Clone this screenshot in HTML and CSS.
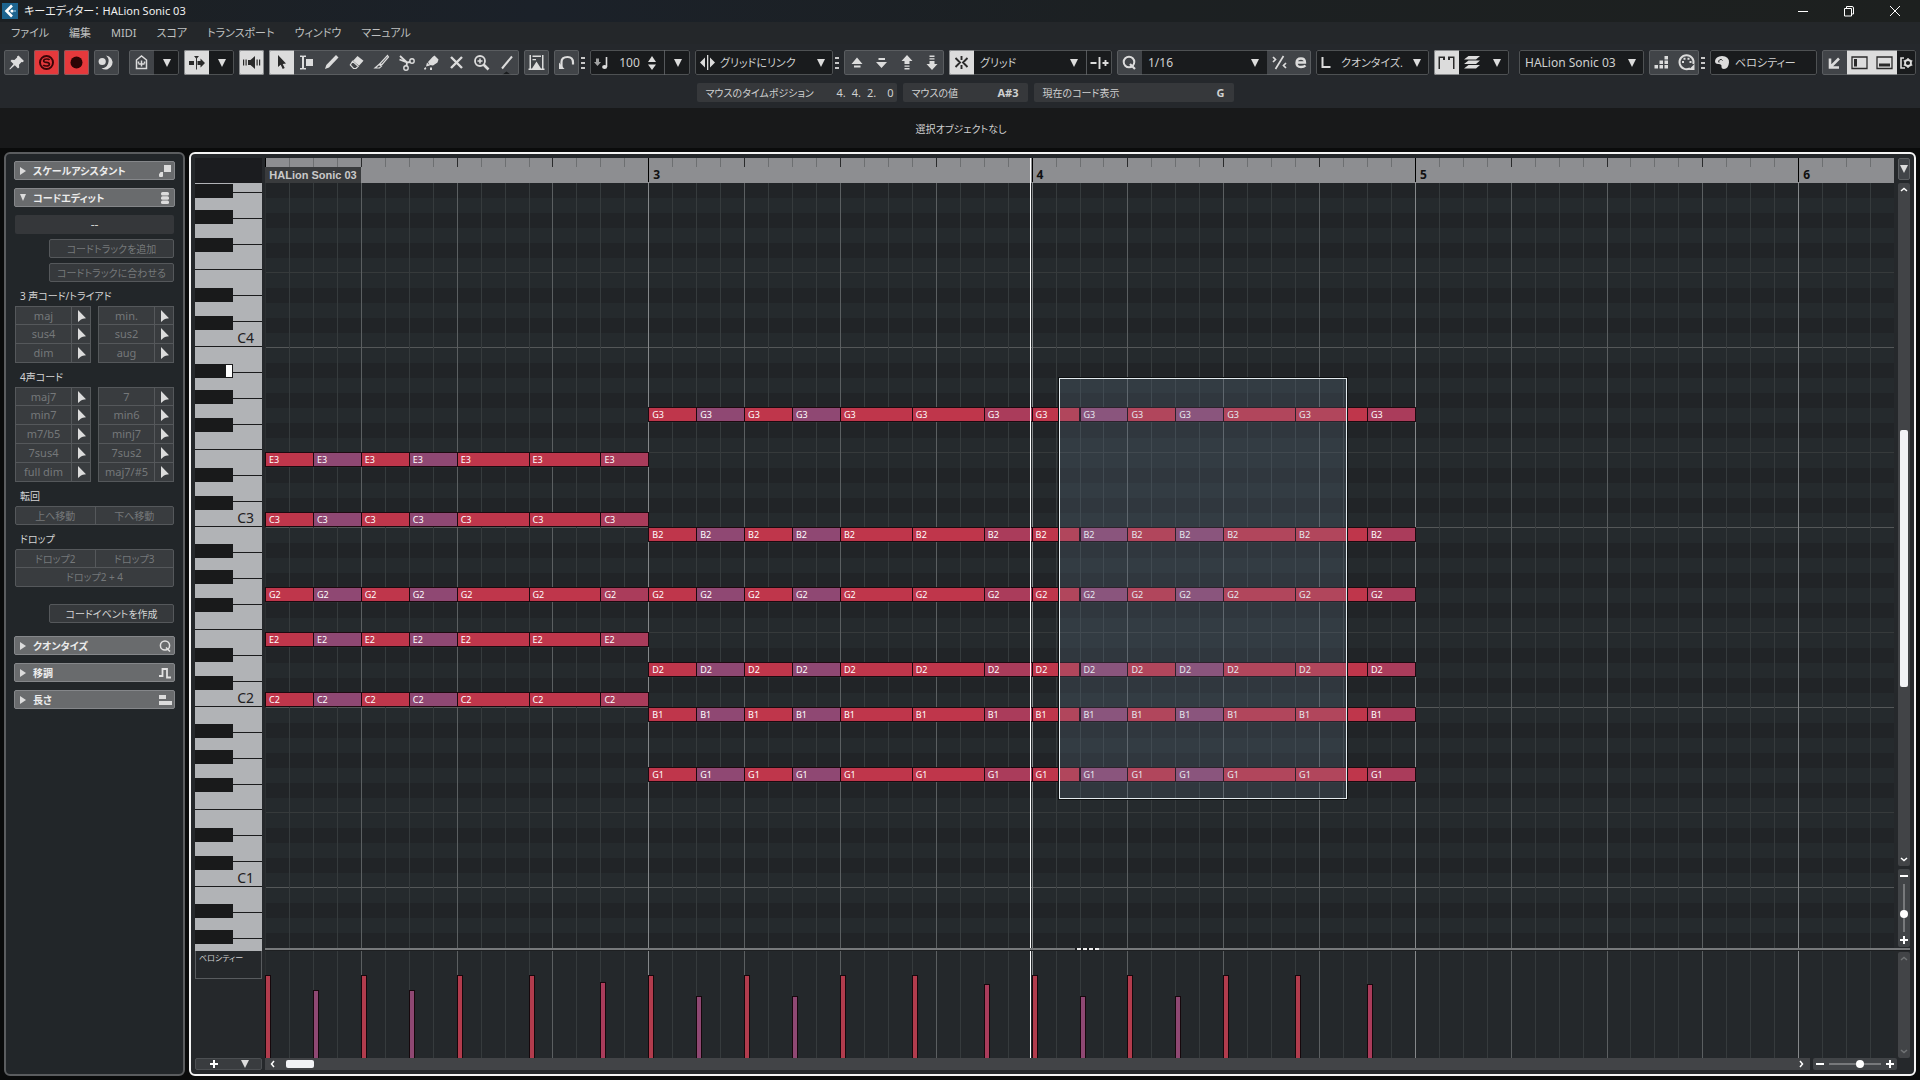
FILE: index.html
```html
<!DOCTYPE html>
<html lang="ja">
<head>
<meta charset="utf-8">
<title>キーエディター： HALion Sonic 03</title>
<meta name="viewport" content="width=device-width, initial-scale=1">
<link rel="stylesheet" href="styles.css">
</head>
<body>
<svg class="defs" aria-hidden="true">
  <symbol id="down" viewBox="0 0 8 8"><path d="M0 0h8L4 8z"/></symbol>
  <symbol id="ptr" viewBox="0 0 8 12"><path d="M0 0l8 8.300L4.800 8.800 3 9.500 0 12z"/></symbol>
</svg>

<header class="titlebar">
  <svg class="app-icon" viewBox="0 0 16 16"><rect width="16" height="16" fill="#1d648f"/><path d="M10 2.500L4.500 8l5.500 5.500" fill="none" stroke="#fff" stroke-width="2.600"/><circle cx="10" cy="8" r="1.600" fill="#fff"/><circle cx="13" cy="8" r="1" fill="#7fb6d6"/></svg>
  <h1 class="title">キーエディター： HALion Sonic 03</h1>
  <div class="window-buttons">
    <button aria-label="最小化"><svg viewBox="0 0 12 12"><path d="M1 6.500h10"/></svg></button>
    <button aria-label="元に戻す"><svg viewBox="0 0 12 12"><path d="M1.500 3.500h7v7.500h-7zM3.500 3.500V1.500h5.500q1.500 0 1.500 1.500v6H8.500"/></svg></button>
    <button aria-label="閉じる"><svg viewBox="0 0 12 12"><path d="M1 1l10 10M11 1L1 11"/></svg></button>
  </div>
</header>

<nav class="menubar">
  <a href="#file">ファイル</a><a href="#edit">編集</a><a href="#midi">MIDI</a><a href="#score">スコア</a><a href="#transport">トランスポート</a><a href="#window">ウィンドウ</a><a href="#manual">マニュアル</a>
</nav>

<div class="toolbar">
  <div class="group"><button class="tool" aria-label="ピン"><svg viewBox="0 0 25 25"><path d="M14.500 5.500l5.500 5.500-1.500 1.200-1-.2-2.500 2.800.2 2.700-1.200 1-3.200-3.200L6 19.500l-.7-.6 4.200-4.900-3-3 1.100-1.200 2.800.3 2.700-2.600-.1-1z"/></svg></button></div>
  <div class="group"><button class="tool red" aria-label="ソロ"><svg viewBox="0 0 25 25"><circle cx="12.500" cy="12.500" r="6.500" fill="none" stroke="#3a0507" stroke-width="2"/><path d="M15.500 10q-.5-1-3-1t-2.800 1.600 2.800 1.800 2.900 1.900-2.900 1.700-3.200-1.200" fill="none" stroke="#3a0507" stroke-width="1.700"/></svg></button></div>
  <div class="group"><button class="tool red" aria-label="録音"><svg viewBox="0 0 25 25"><circle cx="12.500" cy="12.500" r="6" fill="#2b0405"/></svg></button></div>
  <div class="group"><button class="tool" aria-label="レトロスペクティブ録音"><svg viewBox="0 0 25 25"><path d="M12 5.500a7 7 0 1 1-4.500 12.700A7.200 7.200 0 0 0 12 5.500z"/><circle cx="8.200" cy="11.500" r="3.600"/></svg></button></div>
  <div class="group apart dark"><button class="tool fill" aria-label="ホーム"><svg viewBox="0 0 25 25"><path d="M7.500 18.500h10V10l-5-4-5 4zM9.500 14h6M12.500 10.500v6M9.500 11.500v2M15.500 11.500v2" fill="none" stroke="#dcdcdc" stroke-width="1.500"/></svg></button><button class="tool" aria-label="ホームメニュー"><svg class="tri"><use href="#down"/></svg></button></div>
  <div class="group dark"><button class="tool on" aria-label="自動スクロール"><svg viewBox="0 0 25 25"><path d="M5 11h5v4H5zM13.500 11h3V8.500l4.500 4.500-4.500 4.500V15h-3zM10 6h5l-2.500 3z"/><path d="M12.500 7v12.500" stroke="#333" stroke-width="1"/></svg></button><button class="tool" aria-label="自動スクロール設定"><svg class="tri"><use href="#down"/></svg></button></div>
  <div class="group"><button class="tool on" aria-label="試聴"><svg viewBox="0 0 25 25"><path d="M9 10h2.500l4.500-4v13l-4.500-4H9zM4 9.500h1.200v6H4zM6.500 9.500h1.200v6H6.500zM17.500 9.500h1.200v6h-1.200zM20 9.500h1.200v6H20z"/></svg></button></div>
  <div class="group">
    <button class="tool on" aria-label="選択"><svg viewBox="0 0 25 25"><path d="M9 5l8 8.500-3.300.4 2 4-2 1-2-4.200L9 17z"/></svg></button>
    <button class="tool" aria-label="範囲"><svg viewBox="0 0 25 25"><path d="M6 5.500h2.500L9 6l.5-.5H12v1.500h-2v11h2v1.500H9.500L9 19l-.5.500H6V18h2V7H6zM12 9h7v7h-7z"/></svg></button>
    <button class="tool" aria-label="鉛筆"><svg viewBox="0 0 25 25"><path d="M17 5l2.500 2.500L10 17.500 6 19l1.300-4z"/></svg></button>
    <button class="tool" aria-label="消しゴム"><svg viewBox="0 0 25 25"><path d="M13.500 6l6 4.800-4.500 5-6-5z"/><path d="M8.500 11.300l5.700 4.900-2.200 2.300H9.500L6.300 15z" fill="none" stroke="#dcdcdc" stroke-width="1.200"/></svg></button>
    <button class="tool" aria-label="ナイフ"><svg viewBox="0 0 25 25"><path d="M18.500 5.500l1 1.500-6.500 7.500-2.500-.5zM10 14.500l2.500 1.500-2 2H6z" fill="none" stroke="#dcdcdc" stroke-width="1.200"/></svg></button>
    <button class="tool" aria-label="はさみ"><svg viewBox="0 0 25 25"><path d="M6 6l7 6.500 3.500-.5M5.500 9.500l7.500 3-.5 3.500" fill="none" stroke="#dcdcdc" stroke-width="1.800"/><circle cx="18" cy="11" r="2.200" fill="none" stroke="#dcdcdc" stroke-width="1.400"/><circle cx="12" cy="18" r="2.200" fill="none" stroke="#dcdcdc" stroke-width="1.400"/></svg></button>
    <button class="tool" aria-label="のり"><svg viewBox="0 0 25 25"><path d="M13.500 7l2-1.500 4 4-1 3-4.500 3-3.500-.5-1.500-3zM8 12.500l3 3-4 1zM6.500 17q1.500 2 0 2.500t-1.500-1zM11 17.500h2V20h-2z"/></svg></button>
    <button class="tool" aria-label="ミュート"><svg viewBox="0 0 25 25"><path d="M7 7l11 11M18 7L7 18" stroke="#dcdcdc" stroke-width="2.400"/></svg></button>
    <button class="tool" aria-label="ズーム"><svg viewBox="0 0 25 25"><circle cx="11" cy="11" r="5" fill="none" stroke="#dcdcdc" stroke-width="1.800"/><path d="M11 8.500v5M8.500 11h5" stroke="#dcdcdc" stroke-width="1.500"/><path d="M14.500 14.500l5 5" stroke="#dcdcdc" stroke-width="2.600"/></svg></button>
    <button class="tool" aria-label="ライン"><svg viewBox="0 0 25 25"><path d="M8 18.500L18 6.500" stroke="#dcdcdc" stroke-width="2"/><path d="M8 25l4.500-3.500L17 25z" fill="#191b1d"/></svg></button>
  </div>
  <div class="group"><button class="tool" aria-label="コントローラーレーン"><svg viewBox="0 0 25 25"><path d="M5.500 5H7v14H5.500zM18 5h1.500v14H18zM8.500 5.500H17V7H8.500zM8.500 9H12v1.300H8.500zM4.500 18.500H8l4.500-7 4.500 7h3.500V20h-16z"/></svg></button></div>
  <div class="group"><button class="tool" aria-label="フィードバック"><svg viewBox="0 0 25 25"><path d="M7.500 17.500V12q0-5 6-5 5.500 0 5.500 5.500v2" fill="none" stroke="#dcdcdc" stroke-width="2.200"/><path d="M5 12.500l5.500 6.500H5z"/></svg></button></div>
  <span class="grip"></span>
  <div class="group dark velocity"><svg class="ico" viewBox="0 0 25 25"><path d="M6 8.500h3V12h2l-3.500 4L4 12h2z" opacity=".7"/><path d="M16.500 7v10" stroke="#dcdcdc" stroke-width="1.600"/><ellipse cx="14.600" cy="17" rx="2.500" ry="2"/></svg><input class="number" type="text" value="100" aria-label="挿入ベロシティー"><svg class="spin" viewBox="0 0 8 14"><path d="M0 6l4-6 4 6zM0 8.500h8l-4 5.500z"/></svg><button class="tool cell" aria-label="ベロシティー設定"><svg class="tri"><use href="#down"/></svg></button></div>
  <div class="group dark link kana"><svg class="ico" viewBox="0 0 25 25"><path d="M10 7.500v10L5 12.500zM15 7.500v10l5-5zM12 5h1.300v15H12z"/></svg><select aria-label="グリッドにリンク"><option>グリッドにリンク</option></select><svg class="tri"><use href="#down"/></svg></div>
  <span class="grip"></span>
  <div class="group">
    <button class="tool" aria-label="上へ移動"><svg viewBox="0 0 25 25"><path d="M13 7.500l5.500 6.500h-11zM10 15.500h6.500v2H10z"/></svg></button>
    <button class="tool" aria-label="下へ移動"><svg viewBox="0 0 25 25"><path d="M12.500 18l5.500-6H7zM9.500 8H16v2H9.500z"/></svg></button>
    <button class="tool" aria-label="1オクターブ上へ"><svg viewBox="0 0 25 25"><path d="M13 5l5.500 6h-3v3h-5v-3h-3zM10.500 15.500h5v1.300h-5zM10.500 18h5v1.500h-5z"/></svg></button>
    <button class="tool" aria-label="1オクターブ下へ"><svg viewBox="0 0 25 25"><path d="M13 20l5.500-6h-3v-3h-5v3h-3zM10.500 8.200h5v1.300h-5zM10.500 5.500h5V7h-5z"/></svg></button>
  </div>
  <div class="group dark grid-type kana"><button class="tool on" aria-label="スナップ"><svg viewBox="0 0 25 25"><path d="M6.500 8l4.500 4.500L6.500 17M18.500 8L14 12.500l4.500 4.500M12.500 6v4M12.500 15v4" fill="none" stroke="#2a2a2a" stroke-width="1.900"/></svg></button><select aria-label="スナップタイプ"><option>グリッド</option></select><svg class="tri"><use href="#down"/></svg><button class="tool cell" aria-label="グリッド調整"><svg viewBox="0 0 25 25"><path d="M3.500 13h6M12.500 7v12M15.500 13h6M18.500 10v6" stroke="#dcdcdc" stroke-width="1.900"/></svg></button></div>
  <div class="group dark quantize"><button class="tool fill" aria-label="クオンタイズを適用"><svg viewBox="0 0 25 25"><circle cx="12" cy="12" r="5.300" fill="none" stroke="#dcdcdc" stroke-width="2"/><path d="M13 14l5 5" stroke="#dcdcdc" stroke-width="2.200"/></svg></button><select aria-label="クオンタイズ"><option>1/16</option></select><svg class="tri"><use href="#down"/></svg><button class="tool fill" aria-label="ソフトクオンタイズ"><svg viewBox="0 0 25 25"><path d="M8.500 19l8-13M6 7l2.500 2.500L6 12M19 13l-2.500 2.500L19 18" fill="none" stroke="#dcdcdc" stroke-width="1.700"/></svg></button><button class="tool fill slim" aria-label="クオンタイズパネル"><svg viewBox="0 0 19 25"><path d="M4.500 12.500h8.500q0-4-4-4-4.500 0-4.500 4.500 0 4 4.500 4 3 0 4.500-1.500" fill="none" stroke="#dcdcdc" stroke-width="2.300"/></svg></button></div>
  <div class="group dark length kana"><svg class="ico" viewBox="0 0 25 25"><path d="M6.500 7v10h8" fill="none" stroke="#dcdcdc" stroke-width="2"/></svg><select aria-label="長さクオンタイズ"><option>クオンタイズ.</option></select><svg class="tri"><use href="#down"/></svg></div>
  <div class="group dark"><button class="tool on" aria-label="パート境界"><svg viewBox="0 0 25 25"><path d="M4.500 6.500H11V10H9V8H6v11H4.500zM14 6.500h6.500V19H19V8h-3v2h-2z"/></svg></button><button class="tool" aria-label="レイヤー"><svg viewBox="0 0 25 25"><path d="M9.500 6H21l-4 3.500H5zM9.500 10.500H21L17 14H5zM9.500 15H21l-4 3.500H5z"/></svg></button><button class="tool" aria-label="レイヤー設定"><svg class="tri"><use href="#down"/></svg></button></div>
  <div class="group apart dark track"><select aria-label="編集パート"><option>HALion Sonic 03</option></select><svg class="tri"><use href="#down"/></svg></div>
  <div class="group"><button class="tool" aria-label="ステップ入力"><svg viewBox="0 0 25 25"><path d="M5.500 15H9v3.500H5.500zM10.500 15H14v3.500h-3.500zM10.500 10.500H14V14h-3.500zM15.500 15H19v3.500h-3.500zM15.500 10.500H19V14h-3.500zM15.500 6H19v3.500h-3.500z"/></svg></button><button class="tool" aria-label="MIDI入力"><svg viewBox="0 0 25 25"><path d="M16 18.300A7 7 0 1 1 19.300 14" fill="none" stroke="#dcdcdc" stroke-width="2"/><path d="M8 11h2v2H8zM9.500 7.800h2v2h-2zM13.500 7.800h2v2h-2zM15.500 11h2v2h-2zM20.500 14v6h-6z"/></svg></button></div>
  <span class="grip"></span>
  <div class="group dark colors kana"><svg class="ico" viewBox="0 0 25 25"><path d="M12 6q7 0 7 6.500-.5 6-5 6.500-3 0-2.500-3.500-.5-1.500-2.500-1.500-4 .5-4-3Q5.500 6.500 12 6z"/><path d="M9 12.500a2 2 0 0 1 3.500-2" stroke="#191b1d" fill="none"/></svg><select aria-label="イベントカラー"><option>ベロシティー</option></select></div>
  <div class="group dark zones"><button class="tool fill" aria-label="別ウィンドウ"><svg viewBox="0 0 25 25"><path d="M17 8.500L9 16.500M8 8.500v9h9" fill="none" stroke="#dcdcdc" stroke-width="2.600"/></svg></button><button class="tool on" aria-label="左ゾーン"><svg viewBox="0 0 25 25"><path d="M5 7h15v11.500H5z" fill="none" stroke="#2a2a2a" stroke-width="1.300"/><path d="M7 9h3v7.500H7z"/></svg></button><button class="tool on" aria-label="下ゾーン"><svg viewBox="0 0 25 25"><path d="M5 7h15v11.500H5z" fill="none" stroke="#2a2a2a" stroke-width="1.300"/><path d="M7 13.500h11v3H7z"/></svg></button><button class="tool slim" aria-label="レイアウト設定"><svg viewBox="0 0 19 25"><path d="M7 8H4v10h4" fill="none" stroke="#dcdcdc" stroke-width="1.600"/><circle cx="11" cy="13" r="3" fill="none" stroke="#dcdcdc" stroke-width="1.800"/><path d="M11 8v2M11 16v2M6.700 10.500l1.500 1M13.800 14.500l1.500 1M6.700 15.500l1.500-1M13.800 11.500l1.500-1" stroke="#dcdcdc" stroke-width="1.400"/></svg></button></div>
</div>

<div class="info">
  <div class="info-cell wide"><span>マウスのタイムポジション</span><span class="pos"><i>4.</i><i>4.</i><i>2.</i><i>0</i></span></div>
  <div class="info-cell"><span>マウスの値</span><b>A#3</b></div>
  <div class="info-cell wide"><span>現在のコード表示</span><b>G</b></div>
</div>
<div class="status">選択オブジェクトなし</div>

<main class="workspace">
  <aside class="inspector">
    <button class="section"><svg class="fold" viewBox="0 0 8 8"><path d="M1 0l6 4-6 4z"/></svg><span>スケールアシスタント</span><svg class="sico" viewBox="0 0 14 14"><path d="M6 1h7v7H6zM2 9q0-1 1-1h2v4q0 1-1 1H2q-1 0-1-1v-2z"/></svg></button>
    <button class="section"><svg class="fold" viewBox="0 0 8 8"><path d="M1 0h6L4 7z"/></svg><span>コードエディット</span><svg class="sico" viewBox="0 0 14 14"><rect x="3" y="1" width="8" height="3.400" rx="1.500"/><rect x="3" y="5.300" width="8" height="3.400" rx="1.500"/><rect x="3" y="9.600" width="8" height="3.400" rx="1.500"/></svg></button>
    <div class="chord-editor">
      <output class="chord-display">--</output>
      <button class="action" disabled>コードトラックを追加</button>
      <button class="action" disabled>コードトラックに合わせる</button>
      <h2>3 声コード/トライアド</h2>
      <div class="chords" data-chords="maj,min.,sus4,sus2,dim,aug"></div>
      <h2>4声コード</h2>
      <div class="chords" data-chords="maj7,7,min7,min6,m7/b5,minj7,7sus4,7sus2,full dim,maj7/#5"></div>
      <h2>転回</h2>
      <div class="pair"><button disabled>上へ移動</button><button disabled>下へ移動</button></div>
      <h2>ドロップ</h2>
      <div class="pair"><button disabled>ドロップ2</button><button disabled>ドロップ3</button><button class="both" disabled>ドロップ2 + 4</button></div>
      <button class="action create">コードイベントを作成</button>
    </div>
    <button class="section"><svg class="fold" viewBox="0 0 8 8"><path d="M1 0l6 4-6 4z"/></svg><span>クオンタイズ</span><svg class="sico" viewBox="0 0 14 14"><circle cx="7" cy="6.500" r="4.600" fill="none" stroke="#e2e2e2" stroke-width="1.500"/><path d="M8 8.500l4 4" stroke="#e2e2e2" stroke-width="1.600"/></svg></button>
    <button class="section"><svg class="fold" viewBox="0 0 8 8"><path d="M1 0l6 4-6 4z"/></svg><span>移調</span><svg class="sico" viewBox="0 0 14 14"><path d="M1 10h3.500V3H9v8.500h4" fill="none" stroke="#e2e2e2" stroke-width="1.800"/></svg></button>
    <button class="section"><svg class="fold" viewBox="0 0 8 8"><path d="M1 0l6 4-6 4z"/></svg><span>長さ</span><svg class="sico" viewBox="0 0 14 14"><path d="M1 2h7v4H1zM1 8h13v4H1z"/></svg></button>
  </aside>

  <section class="editor">
    <div class="corner"></div>
    <div class="ruler"><div class="ticks" id="ticks"></div><span class="part-name">HALion Sonic 03</span></div>
    <button class="ruler-menu" aria-label="ルーラー設定"><svg class="tri"><use href="#down"/></svg></button>

    <div class="piano" id="piano"></div>
    <div class="roll">
      <div class="lanes"><div class="lane-octave"></div><div class="lane-octave"></div><div class="lane-octave"></div><div class="lane-octave"></div><div class="lane-octave"></div></div>
      <div class="columns"></div>
      <div class="notes" id="notes"></div>
    </div>
    <div class="rail">
      <div class="scroll-v"><svg viewBox="0 0 8 5"><path d="M1 4l3-2.500L7 4"/></svg><span class="thumb-v"></span><svg viewBox="0 0 8 5"><path d="M1 1l3 2.500L7 1"/></svg></div>
      <div class="zoom-v"><button aria-label="縦に縮小"><svg viewBox="0 0 8 8"><path d="M0 4h8"/></svg></button><input type="range" value="66" aria-label="縦ズーム"><button aria-label="縦に拡大"><svg viewBox="0 0 8 8"><path d="M0 4h8M4 0v8"/></svg></button></div>
    </div>

    <div class="divider"><span class="handle"></span></div>

    <div class="lane-head"><span>ベロシティー</span></div>
    <div class="velocities"><div class="columns"></div><div class="notes" id="vels"></div></div>
    <div class="scroll-v faint"><svg viewBox="0 0 8 5"><path d="M1 4l3-2.500L7 4"/></svg><svg viewBox="0 0 8 5"><path d="M1 1l3 2.500L7 1"/></svg></div>

    <div class="lane-buttons"><button aria-label="レーンを追加"><svg viewBox="0 0 8 8"><path d="M0 4h8M4 0v8"/></svg></button><button aria-label="レーン設定"><svg class="tri"><use href="#down"/></svg></button></div>
    <div class="bottom">
      <div class="scroll-h"><svg viewBox="0 0 5 8"><path d="M4 1L1.500 4 4 7"/></svg><span class="thumb-h"></span><svg viewBox="0 0 5 8"><path d="M1 1l2.500 3L1 7"/></svg></div>
      <div class="zoom-h"><button aria-label="横に縮小"><svg viewBox="0 0 8 8"><path d="M0 4h8"/></svg></button><input type="range" value="61" aria-label="横ズーム"><button aria-label="横に拡大"><svg viewBox="0 0 8 8"><path d="M0 4h8M4 0v8"/></svg></button></div>
    </div>
  </section>
</main>
<script src="editor.js"></script>
</body>
</html>
```
FILE: styles.css
```css
* { box-sizing: border-box; }

body {
  margin: 0;
  height: 100vh;
  display: flex;
  flex-direction: column;
  background: #0a0b0b;
  color: #cfd0d0;
  font: 12px/16px "Noto Sans", "Noto Sans CJK JP", sans-serif;
  font-feature-settings: "palt";
  overflow: hidden;
}

button, input, select {
  margin: 0;
  padding: 0;
  border: 0;
  background: none;
  color: inherit;
  font: inherit;
  font-feature-settings: inherit;
  border-radius: 0;
}

select { appearance: none; }
svg { display: block; fill: #dcdcdc; flex: none; }
.defs { position: absolute; width: 0; height: 0; }
.tri { width: 8px; height: 8px; }

/* title and menu */
.titlebar {
  height: 22px;
  flex: none;
  display: flex;
  align-items: center;
  padding-left: 2px;
  gap: 6px;
  background: linear-gradient(90deg, #1c2023, #1b2129 28%, #1c2022 60%, #1d201f);
}
.app-icon { width: 16px; height: 16px; }
.title { margin: 0; flex: 1; font-size: 11px; font-weight: 400; color: #f0f0f0; }
.window-buttons { display: flex; padding-right: 2px; }
.window-buttons button { width: 46px; height: 22px; display: grid; place-items: center; }
.window-buttons svg { width: 12px; height: 12px; fill: none; stroke: #fff; }
.menubar { height: 22px; flex: none; display: flex; align-items: center; gap: 20px; padding: 0 11px; background: #24272a; font-size: 11px; }
.menubar a { color: #bfc0c0; text-decoration: none; }

/* toolbar */
.toolbar { flex: none; display: flex; padding: 6px 4px 8px; background: #25282c; }
.group {
  position: relative;
  display: flex;
  align-items: center;
  height: 25px;
  flex: none;
  background: #414448;
  border-radius: 2px;
  overflow: hidden;
}
.group::after { content: ""; position: absolute; inset: 0; border: 1px solid #65686b; border-radius: 2px; opacity: .7; pointer-events: none; }
.group + .group { margin-left: 5px; }
.group + .group.apart { margin-left: 10px; }
.dark { background: #191b1d; }
.tool { width: 25px; height: 25px; display: grid; place-items: center; flex: none; }
.tool svg:not(.tri) { width: 25px; height: 25px; }
.tool.slim, .tool.slim svg:not(.tri) { width: 19px; }
.tool.fill { background: #414448; }
.tool.on { background: #dcdcdc; }
.tool.on svg { fill: #2a2a2a; }
.tool.red { background: #e5393c; }
.tool.cell { border-left: 1px solid #55585b; width: 26px; }
.ico { width: 25px; height: 25px; }
.group select { flex: 1; min-width: 0; }
.kana select { font-size: 11px; }
.group > .tri { margin-right: 8px; }
.grip { width: 11px; height: 25px; flex: none; background: repeating-linear-gradient(#c8c8c8 0 2px, transparent 2px 5px) 2px 7px / 4px 12px no-repeat; }
.velocity { width: 100px; }
.number { width: 31px; flex: 1; min-width: 0; text-align: center; }
.spin { width: 8px; height: 14px; margin: 0 8px 0 4px; }
.link { width: 138px; }
.grid-type { width: 163px; }
.grid-type select, .quantize select, .track select { padding-left: 6px; }
.quantize { width: 194px; }
.length { width: 113px; }
.track { width: 125px; }
.colors { width: 107px; }
.zones { flex: 1 0 94px; }
.zones .slim { flex: 1; }

/* info line */
.info { flex: none; display: flex; justify-content: center; gap: 6px; padding: 0 0 6px 10px; background: #25282c; }
.info-cell { width: 125px; height: 19px; display: flex; align-items: center; justify-content: space-between; padding: 0 9px; background: #36383b; border-radius: 2px; font-size: 10px; }
.info-cell.wide { width: 200px; }
.info-cell.wide:first-child { padding-right: 3px; }
.info-cell b, .pos { font-size: 11px; }
.pos { display: flex; gap: 6px; }
.pos i { font-style: normal; }
.pos i:last-child { margin-left: 5px; }
.status { flex: none; height: 40px; padding: 2px 0 0 2px; display: grid; place-items: center; background: #18191a; font-size: 10px; }

/* workspace */
.workspace { flex: 1; display: flex; gap: 4px; padding: 4px; min-height: 0; }
.inspector {
  width: 181px;
  flex: none;
  padding: 7px 8px;
  display: flex;
  flex-direction: column;
  gap: 8px;
  border: 2px solid #5b5d5f;
  border-radius: 6px;
  background: #222629;
}
.section { flex: none; height: 19px; display: flex; align-items: center; gap: 6px; padding: 0 2px 0 4px; background: #696b6d; border: 1px solid #85878a; border-radius: 2px; color: #ececec; font-size: 10px; font-weight: 700; text-align: left; }
.section span { flex: 1; }
.fold { width: 8px; height: 8px; }
.sico { width: 14px; height: 14px; }
.chord-editor { display: flex; flex-direction: column; padding: 0 1px; margin-bottom: 5px; font-size: 10px; }
.chord-display { height: 19px; display: grid; place-items: center; background: #35373a; border-radius: 2px; font-size: 12px; }
.action { height: 19px; margin: 5px 0 0 34px; background: #36393c; border: 1px solid #55585b; border-radius: 2px; line-height: 16px; }
.create { margin-top: 17px; color: #d4d4d4; }
.chord-editor button:disabled { color: #75787a; }
.chord-editor h2 { margin: 0; height: 24px; padding: 3px 5px; font-size: 10px; line-height: 22px; font-weight: 400; color: #d4d4d4; }
.chords { display: grid; grid-template-columns: 1fr 1fr; column-gap: 7px; font-size: 11px; }
.chord-row { display: flex; height: 19px; background: #393c3f; border: 1px solid #55585b; border-top-width: 0; }
.chord-row:nth-child(-n+2) { border-top-width: 1px; }
.chord-row button:first-child { flex: 1; border-right: 1px solid #55585b; line-height: 16px; }
.chord-row button:last-child { width: 18px; padding-left: 2px; display: grid; place-items: center; }
.chord-row svg { width: 8px; height: 12px; }
.pair { display: grid; grid-template-columns: 1fr 1fr; border: 1px solid #55585b; border-radius: 2px; background: #393c3f; }
.pair button { height: 17px; line-height: 16px; }
.pair button + button { border-left: 1px solid #55585b; }
.pair .both { grid-column: 1 / -1; height: 19px; border-left: 0; border-top: 1px solid #55585b; }

/* key editor */
.editor {
  flex: 1;
  min-width: 0;
  display: grid;
  grid-template-columns: 67px minmax(0, 1fr) 12px;
  grid-template-rows: 25px minmax(0, 1fr) 3px 107px 12px;
  padding: 4px;
  border: 2px solid #f4f4f4;
  border-radius: 6px;
  background: #25282b;
}
.corner { background: #1b1c1f; }
.ruler, .roll, .velocities { position: relative; margin: 0 4px 0 3px; display: grid; grid-template: minmax(0, 1fr) / minmax(0, 1fr); overflow: hidden; }
.ruler { background: #8d8e91; color: #111; }
.ruler > *, .roll > *, .velocities > * { grid-area: 1 / 1; }
.ticks, .columns { display: grid; grid-template-columns: repeat(68, minmax(0, 1fr)); }
.ticks span { height: 9px; border-left: 1px solid #6d6f71; }
.ticks span:nth-child(4n+1) { border-color: #2a2b2c; }
.ticks span:nth-child(16n+1) { height: 24px; padding: 9px 0 0 4px; border-color: #000; font-weight: 700; line-height: 16px; }
.part-name { align-self: end; justify-self: start; width: 96px; height: 16px; background: #393b3d; color: #c9c9c9; text-align: center; font: 700 11px/16px "Liberation Sans", sans-serif; }
.ruler-menu { height: 22px; display: grid; place-items: center; background: #414448; border: 1px solid #5c5f62; border-radius: 2px; }

.piano { overflow: hidden; background: #191a1b; }
.octave { position: relative; height: 180px; display: grid; grid-template-rows: 26px 26px 26px 25px 26px 26px 25px; }
.octave:first-child, .lane-octave:first-child { margin-top: -16px; }
.white { background: #b1b3b6; border-bottom: 1px solid #1a1b1c; color: #1f2021; font-size: 14px; line-height: 32px; padding-right: 8px; text-align: right; }
.black { position: absolute; left: 0; width: 38px; height: 14px; background: #191a1b; }
.black.pressed::after { content: ""; position: absolute; right: 1px; top: 1px; width: 6px; height: 12px; background: #fff; }

.roll { background: #222629; }
.lanes { overflow: hidden; }
.lane-octave {
  height: 180px;
  border-top: 1px solid #545758;
  background:
    linear-gradient(#363a3b 0 1px, transparent 1px) 0 104px / 100% 180px no-repeat,
    linear-gradient(#252a2d 0 15px, #212427 15px 30px, #252a2d 30px 45px, #212427 45px 60px, #252a2d 60px 75px, #212427 75px 90px, #252a2d 90px 120px, #212427 120px 135px, #252a2d 135px 150px, #212427 150px 165px, #252a2d 165px);
}
.columns span { border-left: 1px solid #363b3d; }
.columns span:nth-child(4n+1) { border-color: #5b5f61; }
.columns span:nth-child(16n+1) { border-color: #85888a; }
.columns span:first-child { border-color: #2c3032; }
.notes { position: relative; }
.note { position: absolute; height: 15px; border: 1px solid #1d0a10; padding-left: 3px; color: #fff; font-size: 9px; line-height: 14px; overflow: hidden; }
.strong { background: #bf364b; }
.medium { background: #aa3c5b; }
.soft { background: #8f4873; }
.vel { position: absolute; bottom: 0; width: 6px; border: 1px solid #16080c; border-bottom: 0; }
.vel.strong { background: #b23c4d; }
.playhead { position: absolute; top: 0; bottom: 0; width: 1px; margin-left: -2px; background: #fff; }
.selection { position: absolute; border: 1px solid #e3eaee; background: rgba(115, 145, 170, .18); box-shadow: 0 0 0 1px #0d0f10; }

.rail { display: flex; flex-direction: column; gap: 3px; padding-bottom: 1px; min-height: 0; }
.scroll-v { flex: 1; display: flex; flex-direction: column; align-items: center; justify-content: space-between; padding: 4px 0; background: #424447; border-radius: 2px; }
.scroll-v svg { width: 8px; height: 5px; fill: none; stroke: #fff; stroke-width: 1.500; }
.thumb-v { flex: none; width: 8px; height: 38%; margin-top: 68px; background: #f2f3f6; border-radius: 2px; }
.faint { margin-top: 1px; }
.faint svg { stroke: #707375; }
.zoom-v { height: 78px; display: flex; flex-direction: column; align-items: center; justify-content: space-between; padding: 3px 0; background: #414447; border-radius: 2px; }
.zoom-v button svg, .zoom-h button svg, .lane-buttons svg:not(.tri) { width: 8px; height: 8px; fill: none; stroke: #fff; stroke-width: 2; }
.zoom-v input { writing-mode: vertical-lr; width: 10px; height: 48px; }
input[type="range"] { appearance: none; }
input[type="range"]::-webkit-slider-thumb { appearance: none; width: 8px; height: 8px; border-radius: 50%; background: #fff; }
.zoom-v input { background: linear-gradient(#77797b, #77797b) center / 2px 100% no-repeat; }
.zoom-h input { flex: 1; min-width: 0; height: 8px; background: linear-gradient(#77797b, #77797b) center / 100% 2px no-repeat; }

.divider { grid-column: 2 / -1; margin-left: 3px; display: grid; grid-template-columns: 810fr 24px 812fr; border-bottom: 1px solid #1d1f21; background: #77797b; }
.handle { grid-column: 2; height: 2px; background: repeating-linear-gradient(90deg, #1d1f21 0 2px, #eee 2px 6px); }
.piano { grid-row: 2 / 4; grid-column: 1; }
.corner { grid-area: 1 / 1; }
.ruler { grid-area: 1 / 2; }
.ruler-menu { grid-area: 1 / 3; }
.roll { grid-area: 2 / 2; }
.rail { grid-area: 2 / 3; }
.divider { grid-row: 3; }
.lane-head { grid-area: 4 / 1; }
.velocities { grid-area: 4 / 2; background: #24282b; }
.lane-head span { display: block; height: 28px; padding: 0 3px; border: 1px solid #585b5e; border-top: 0; font-size: 8px; line-height: 14px; }
.lane-buttons { display: grid; grid-template-columns: 1fr 1fr; padding-left: 2px; background: #393c3f; border: 1px solid #4c4f52; border-radius: 2px; }
.lane-buttons button { display: grid; place-items: center; height: 10px; }
.bottom { grid-column: 2 / -1; display: flex; gap: 3px; margin: 0 13px 0 3px; }
.scroll-h { flex: 1; display: flex; align-items: center; padding: 0 6px 0 5px; background: #424447; }
.scroll-h svg { width: 5px; height: 8px; fill: none; stroke: #fff; stroke-width: 1.500; }
.thumb-h { width: 28px; height: 8px; margin: 0 auto 0 11px; background: #f2f3f6; border-radius: 2px; }
.zoom-h { width: 84px; display: flex; align-items: center; gap: 5px; padding: 0 3px; background: #414447; border-radius: 2px; }
```
FILE: editor.js
```js
const STEPS = 68;            // sixteenth notes across the visible range
const pct = n => (n / STEPS * 100) + '%';
const add = (parent, cls, text) => {
  const el = document.createElement('span');
  el.className = cls;
  if (text) el.textContent = text;
  parent.appendChild(el);
  return el;
};

// chord type buttons
document.querySelectorAll('.chords').forEach(box => {
  box.innerHTML = box.dataset.chords.split(',').map(name =>
    `<div class="chord-row"><button disabled>${name}</button><button aria-label="${name} を試聴"><svg><use href="#ptr"/></svg></button></div>`).join('');
});

// ruler and vertical grid
const ticks = document.getElementById('ticks');
for (let i = 0; i < STEPS; i++) add(ticks, '', i && i % 16 === 0 ? String(i / 16 + 2) : '');
document.querySelectorAll('.columns').forEach(c => {
  for (let i = 0; i < STEPS; i++) add(c, '');
});

// keyboard, one block per octave from C4 down; the lowest one is only partly in view
const piano = document.getElementById('piano');
for (let oct = 4; oct >= 0; oct--) {
  const o = document.createElement('div');
  o.className = 'octave';
  for (let k = 0; k < 7; k++) add(o, 'white', k === 6 && oct > 0 ? 'C' + oct : '');
  [17, 43, 71, 121, 149].forEach((top, i) => {
    add(o, oct === 3 && i === 0 ? 'black pressed' : 'black').style.top = top + 'px';
  });
  piano.appendChild(o);
}

// notes: [sixteenth, length, level]
const level = [['strong', 83], ['soft', 68], ['medium', 76]];
const pattern = [[0, 2, 0], [2, 2, 1], [4, 2, 0], [6, 2, 1], [8, 3, 0], [11, 3, 0], [14, 2, 2]];
const ROW = { G3: 224, E3: 269, C3: 329, B2: 344, G2: 404, E2: 449, D2: 479, C2: 509, B1: 524, G1: 584 };
const bars = [
  [0, ['E3', 'C3', 'G2', 'E2', 'C2']],
  [16, ['G3', 'B2', 'G2', 'D2', 'B1', 'G1']],
  [32, ['G3', 'B2', 'G2', 'D2', 'B1', 'G1']]
];
const notes = document.getElementById('notes');
const vels = document.getElementById('vels');
bars.forEach(([start, pitches]) => pattern.forEach(([at, len, lv]) => {
  pitches.forEach(p => {
    const n = add(notes, 'note ' + level[lv][0], p);
    n.style.left = pct(start + at);
    n.style.width = `calc(${pct(len)} + 1px)`;
    n.style.top = ROW[p] + 'px';
  });
  const v = add(vels, 'vel ' + level[lv][0]);
  v.style.left = pct(start + at);
  v.style.height = (level[lv][1] - (start && lv === 1 ? 6 : 0) - (start && lv === 2 ? 2 : 0)) + 'px';
}));

// playhead and rubber band
[ticks.parentNode, notes, vels].forEach(layer => { add(layer, 'playhead').style.left = pct(32); });
const sel = add(notes, 'selection');
sel.style.left = pct(33.14);
sel.style.width = pct(12.02);
sel.style.top = '195px';
sel.style.height = '421px';
```
